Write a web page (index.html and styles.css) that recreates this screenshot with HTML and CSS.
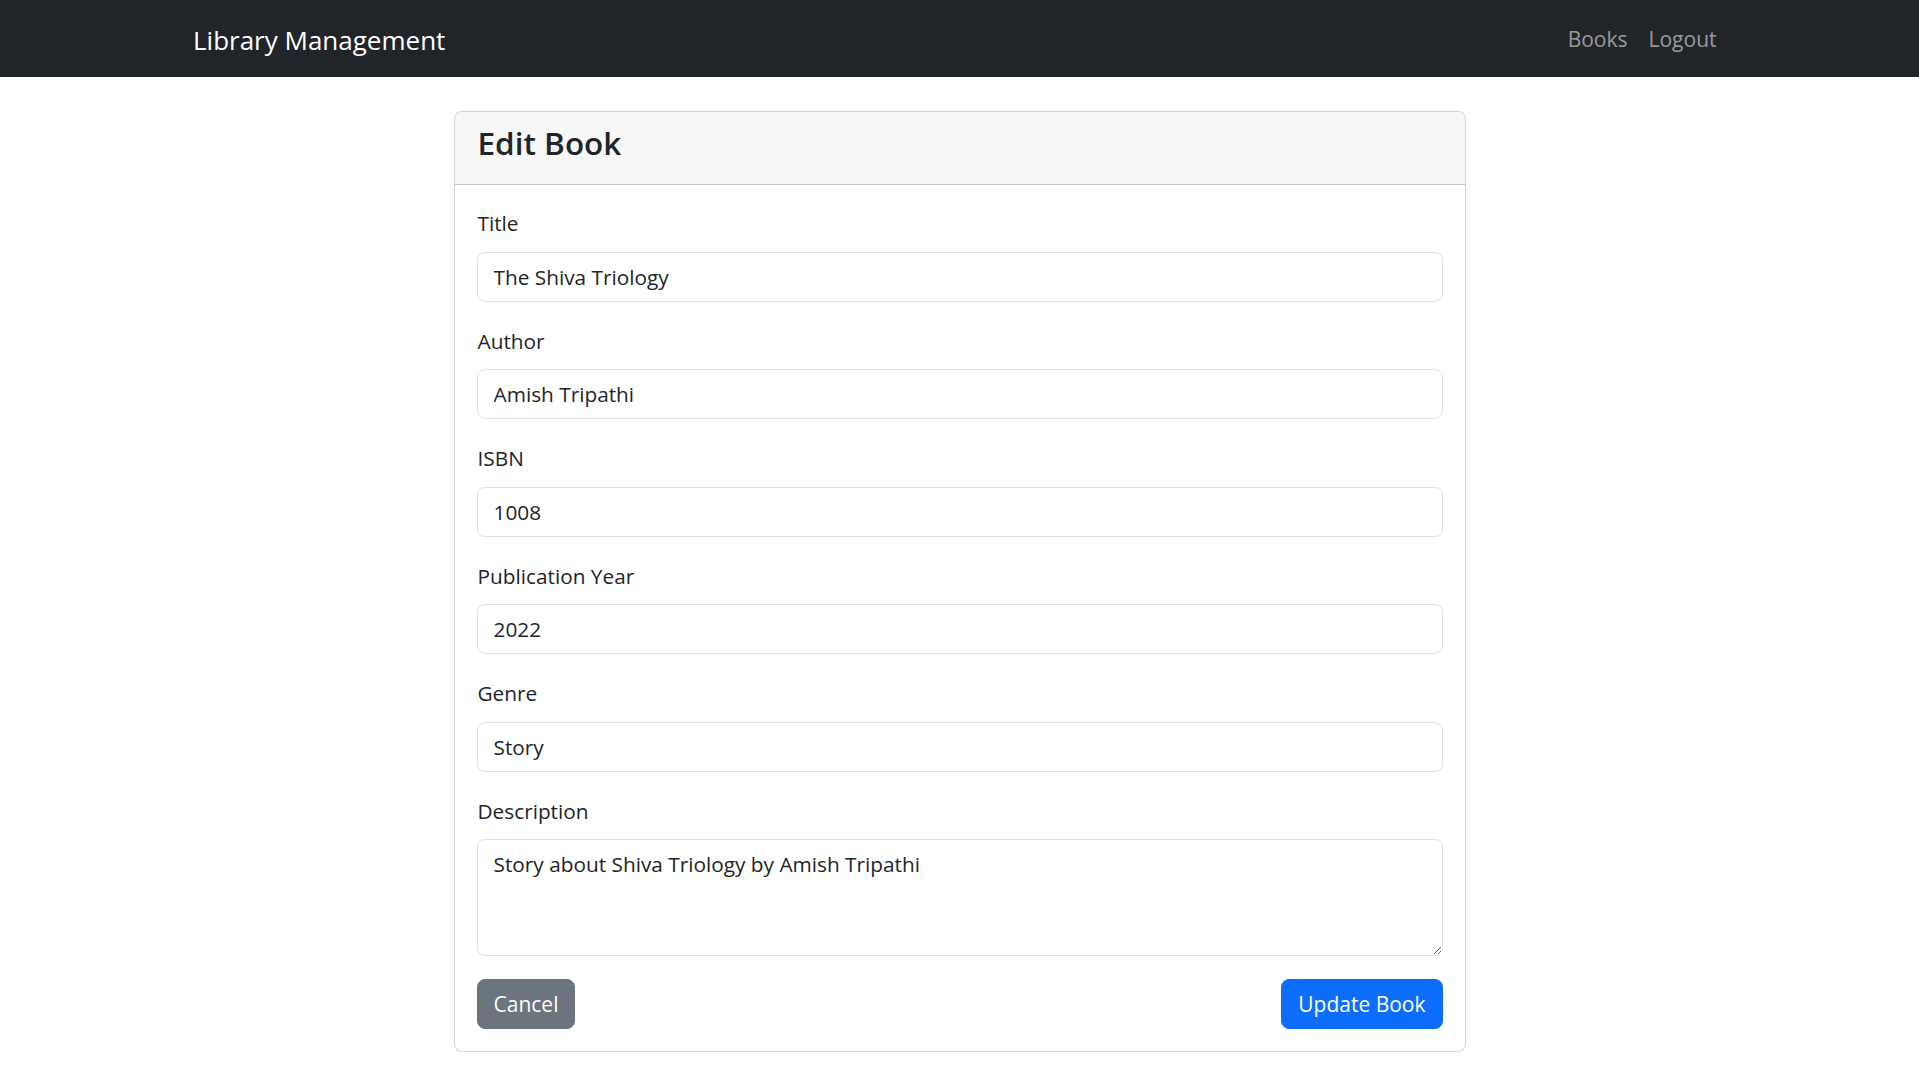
FILE: index.html
```html
<!DOCTYPE html>
<html lang="en">
<head>
<meta charset="utf-8">
<title>Edit Book - Library Management</title>
<link rel="stylesheet" href="styles.css">
</head>
<body>
<nav class="navbar">
  <div class="nav-container">
    <a class="brand" href="#">Library Management</a>
    <ul class="nav-links">
      <li><a class="nav-link" href="#">Books</a></li>
      <li><a class="nav-link" href="#">Logout</a></li>
    </ul>
  </div>
</nav>

<main class="page">
  <div class="card">
    <div class="card-header">
      <h3 class="card-title">Edit Book</h3>
    </div>
    <div class="card-body">
      <form class="form">
        <div class="field">
          <label class="form-label" for="title">Title</label>
          <input class="form-control" id="title" type="text" value="The Shiva Triology">
        </div>
        <div class="field">
          <label class="form-label" for="author">Author</label>
          <input class="form-control" id="author" type="text" value="Amish Tripathi">
        </div>
        <div class="field">
          <label class="form-label" for="isbn">ISBN</label>
          <input class="form-control" id="isbn" type="text" value="1008">
        </div>
        <div class="field">
          <label class="form-label" for="year">Publication Year</label>
          <input class="form-control" id="year" type="text" value="2022">
        </div>
        <div class="field">
          <label class="form-label" for="genre">Genre</label>
          <input class="form-control" id="genre" type="text" value="Story">
        </div>
        <div class="field">
          <label class="form-label" for="description">Description</label>
          <textarea class="form-control form-textarea" id="description" rows="3">Story about Shiva Triology by Amish Tripathi</textarea>
        </div>
        <div class="actions">
          <a class="btn btn-secondary" href="#">Cancel</a>
          <button class="btn btn-primary" type="button">Update Book</button>
        </div>
      </form>
    </div>
  </div>
</main>
</body>
</html>
```
FILE: styles.css
```css
* {
  box-sizing: border-box;
}

html, body {
  margin: 0;
  padding: 0;
}

body {
  font-family: "Open Sans", "Noto Sans", sans-serif;
  font-size: 20.8px;
  line-height: 32px;
  color: #212529;
  background: #ffffff;
}

/* Navbar */
.navbar {
  background: #212529;
  height: 77px;
  display: flex;
  align-items: center;
}

.nav-container {
  width: 1535px;
  margin: 0 auto;
  display: flex;
  align-items: center;
  justify-content: space-between;
}

.brand {
  color: #ffffff;
  text-decoration: none;
  font-size: 26px;
  line-height: 39px;
  padding-left: 1px;
  margin-top: 3px;
}

.nav-links {
  list-style: none;
  margin: 0;
  padding: 0;
  display: flex;
}

.nav-link {
  display: block;
  color: rgba(255, 255, 255, 0.55);
  text-decoration: none;
  font-size: 21px;
  line-height: 30px;
  padding: 0 10.5px;
  margin-top: 1px;
}

/* Card */
.page {
  padding-top: 34px;
  padding-bottom: 20px;
}

.card {
  width: 1012px;
  margin: 0 auto;
  border: 1px solid rgba(0, 0, 0, 0.175);
  border-radius: 8px;
  background: #ffffff;
}

.card-header {
  background: #f7f7f7;
  border-bottom: 1px solid rgba(0, 0, 0, 0.175);
  border-radius: 7px 7px 0 0;
  padding: 10px 22px;
}

.card-title {
  margin: 0 0 10px 0;
  font-size: 31.5px;
  line-height: 42px;
  font-weight: 600;
  padding-left: 1px;
}

.card-body {
  padding: 22px;
}

.form {
  display: flex;
  flex-direction: column;
}

.field {
  display: flex;
  flex-direction: column;
  margin-bottom: 23px;
}

.form-label {
  line-height: 32px;
  margin-bottom: 12.5px;
  padding-left: 1px;
}

.form-control {
  display: block;
  width: 100%;
  height: 50px;
  padding: 8px 16px;
  font: inherit;
  font-size: 20.8px;
  line-height: 32px;
  color: #212529;
  background: #ffffff;
  border: 1px solid #dee2e6;
  border-radius: 8px;
  outline: none;
}

.form-textarea {
  height: 117px;
  resize: vertical;
}

.actions {
  display: flex;
  justify-content: space-between;
  align-items: center;
}

.btn {
  display: inline-block;
  height: 50px;
  padding: 8px 16px;
  font: inherit;
  font-size: 21px;
  line-height: 32px;
  border: 1px solid transparent;
  border-radius: 8px;
  text-decoration: none;
  color: #ffffff;
  cursor: pointer;
}

.btn-secondary {
  background: #6c757d;
  border-color: #6c757d;
}

.btn-primary {
  background: #0d6efd;
  border-color: #0d6efd;
}
```
